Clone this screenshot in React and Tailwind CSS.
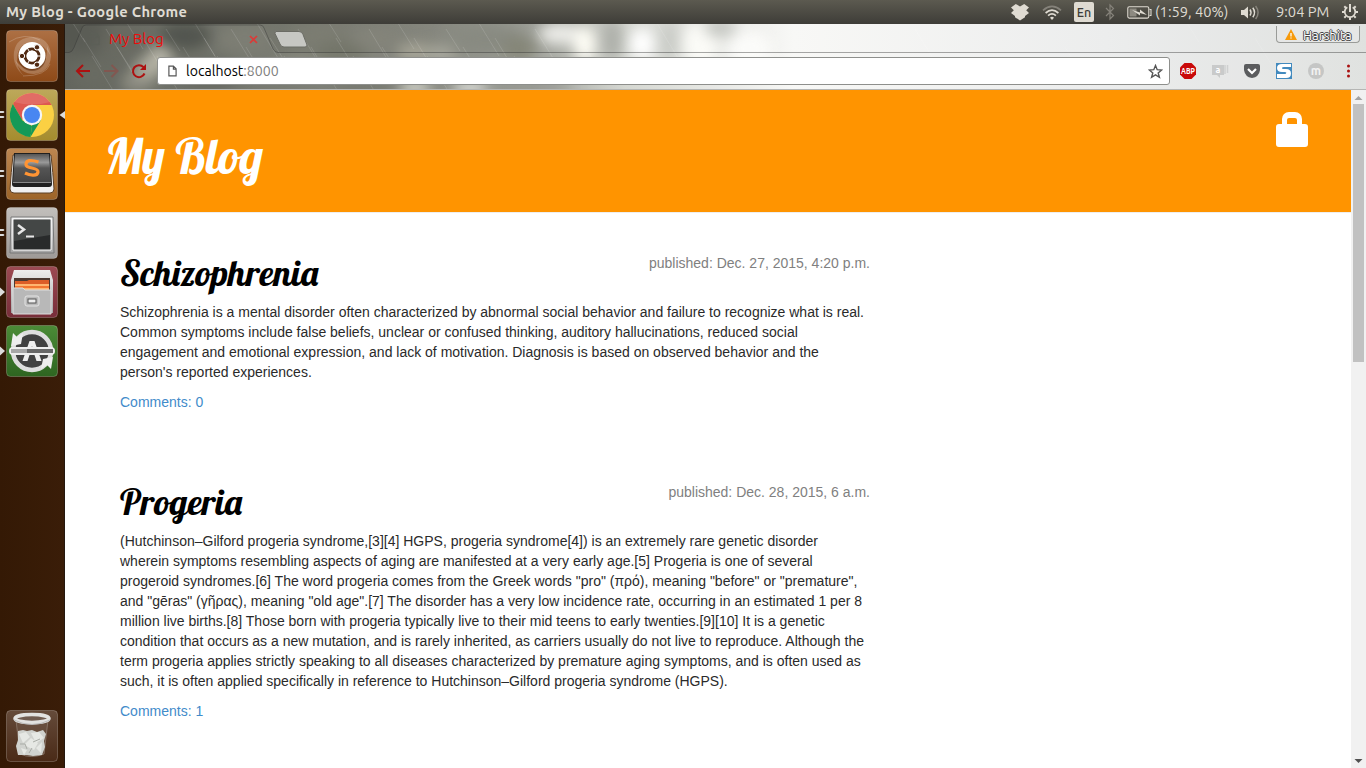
import React from "react";

const posts = [
  {
    title: "Schizophrenia",
    date: "Dec. 27, 2015, 4:20 p.m.",
    comments: 0,
    lines: [
      "Schizophrenia is a mental disorder often characterized by abnormal social behavior and failure to recognize what is real.",
      "Common symptoms include false beliefs, unclear or confused thinking, auditory hallucinations, reduced social",
      "engagement and emotional expression, and lack of motivation. Diagnosis is based on observed behavior and the",
      "person's reported experiences.",
    ],
  },
  {
    title: "Progeria",
    date: "Dec. 28, 2015, 6 a.m.",
    comments: 1,
    lines: [
      "(Hutchinson–Gilford progeria syndrome,[3][4] HGPS, progeria syndrome[4]) is an extremely rare genetic disorder",
      "wherein symptoms resembling aspects of aging are manifested at a very early age.[5] Progeria is one of several",
      "progeroid syndromes.[6] The word progeria comes from the Greek words \"pro\" (πρό), meaning \"before\" or \"premature\",",
      "and \"gēras\" (γῆρας), meaning \"old age\".[7] The disorder has a very low incidence rate, occurring in an estimated 1 per 8",
      "million live births.[8] Those born with progeria typically live to their mid teens to early twenties.[9][10] It is a genetic",
      "condition that occurs as a new mutation, and is rarely inherited, as carriers usually do not live to reproduce. Although the",
      "term progeria applies strictly speaking to all diseases characterized by premature aging symptoms, and is often used as",
      "such, it is often applied specifically in reference to Hutchinson–Gilford progeria syndrome (HGPS).",
    ],
  },
];

function TopBar() {
  return (
    <header className="flex h-6 shrink-0 items-center bg-linear-to-b from-[#5c5a50] to-[#3e3d38] pl-1.5 text-[#dfdbd2] font-['Ubuntu','Noto_Sans',sans-serif]">
      <div className="w-[1004px] whitespace-nowrap text-[14.67px] font-bold leading-6 tracking-[0.31px]">My Blog - Google Chrome</div>
      <svg className="h-5 w-5 shrink-0" viewBox="0 0 20 20" fill="#dfdbd2">
        <path d="M5.800 2 10 4.500 14.200 2 19 5.400 16.200 8.200 19 11 15 14V15.200L10 18.500 5 15.200V14L1 11 3.800 8.200 1 5.400Z" />
      </svg>
      <svg className="ml-3 h-5 w-5 shrink-0" viewBox="0 0 20 20" fill="none" strokeWidth="1.7">
        <path d="M1 8.300Q10 .5 19 8.300" stroke="#85827a" />
        <path d="M3.600 11Q10 5.400 16.400 11M6.100 13.600Q10 10.100 13.900 13.600" stroke="#dfdbd2" />
        <path d="M8 15.700Q10 14 12 15.700L10 18Z" fill="#dfdbd2" />
      </svg>
      <div className="ml-3 flex h-5 w-5 shrink-0 items-center justify-center rounded-[2px] bg-[#dfdbd2] pt-px text-[12.5px] font-medium text-[#3c3b37]">En</div>
      <svg className="ml-[11px] h-5 w-[10px] shrink-0" viewBox="0 0 10 20" fill="none" stroke="#85827a" strokeWidth="1.2">
        <path d="M1 6l7.500 7.500L5 17V3l3.500 3.500L1 14" />
      </svg>
      <svg className="ml-3 h-5 w-[25px] shrink-0" viewBox="0 0 25 20" fill="none" stroke="#dfdbd2" strokeWidth="1.1">
        <rect x=".8" y="4.700" width="21" height="11.400" rx="1.500" />
        <path d="M22.500 7.500H24v6h-1.500" />
        <path d="M2.500 6.500h7v8h-7z" fill="#8d8a81" stroke="none" />
        <path d="M5 8l8 2.600 0-3L20 13l-7-2v2.600Z" fill="#dfdbd2" stroke="none" />
      </svg>
      <div className="ml-[3px] w-[73px] shrink-0 whitespace-nowrap text-[14.67px] leading-6">(1:59, 40%)</div>
      <svg className="ml-3 h-5 w-[21px] shrink-0" viewBox="0 0 21 20" fill="none" stroke="#dfdbd2" strokeWidth="1.5">
        <path d="M1 8h3l4-3.500v12L4 13H1Z" fill="#dfdbd2" stroke="none" />
        <path d="M10 7.500q2 3 0 6M12.800 5.800q3.500 4.700 0 9.400" />
        <path d="M15.600 4q5 6.500 0 13" stroke="#85827a" />
      </svg>
      <div className="ml-[15px] w-[54px] shrink-0 whitespace-nowrap text-[14.67px] leading-6">9:04 PM</div>
      <svg className="ml-[11px] h-[18px] w-[18px] shrink-0" viewBox="0 0 18 18" fill="none" stroke="#dfdbd2">
        <path d="M6.300 4.300a5.300 5.300 0 1 0 5.400 0" strokeWidth="1.8" />
        <path d="M9 1v8" strokeWidth="2" />
        <path d="M1 9h2.500M15 9h2M9 14.500V17M3.300 3.300l1.600 1.600M14.700 3.300l-1.600 1.600M3.300 14.700l1.600-1.600M14.700 14.700l-1.600-1.600" strokeWidth="2" />
      </svg>
    </header>
  );
}

function Tile({ from, to, id, children }) {
  return (
    <svg className="block h-[52px] w-[52px] shrink-0" viewBox="0 0 52 52">
      <defs>
        <linearGradient id={id} x2="0" y2="1">
          <stop offset="0" stopColor={from} />
          <stop offset="1" stopColor={to} />
        </linearGradient>
        <linearGradient id={id + "m"} x2="0" y2="1">
          <stop offset="0" stopColor="#eee" />
          <stop offset="1" stopColor="#a5a5a5" />
        </linearGradient>
        <linearGradient id={id + "d"} x2="0" y2="1">
          <stop offset="0" stopColor="#555" />
          <stop offset=".3" stopColor="#999" />
          <stop offset=".5" stopColor="#555" />
          <stop offset="1" stopColor="#444" />
        </linearGradient>
      </defs>
      <rect x=".5" y=".5" width="51" height="51" rx="4" fill={`url(#${id})`} stroke="#fff" strokeOpacity=".22" />
      {children}
    </svg>
  );
}

function Row({ mark, active, children }) {
  return (
    <div className="flex h-[52px] items-center">
      <svg className="h-3 w-1.5 shrink-0" viewBox="0 0 6 12" fill="#dcdcdc">
        {mark === 2 && <path d="M0 2h3.500l1 1-1 1H0ZM0 7h3.500l1 1-1 1H0Z" />}
        {mark === 1 && <path d="M0 1.500 5 6 0 10.500Z" />}
      </svg>
      {children}
      {active && (
        <svg className="ml-px h-3 w-1.5 shrink-0" viewBox="0 0 6 12" fill="#dcdcdc">
          <path d="M6 2 0.500 6 6 10Z" />
        </svg>
      )}
    </div>
  );
}

function Launcher() {
  return (
    <aside className="flex w-[65px] shrink-0 flex-col gap-[7px] border-r border-[#25180f] bg-linear-to-r from-[#341905] to-[#3a1d08] pt-1.5 pb-1.5">
      <Row>
        <Tile id="dash" from="#ad7044" to="#8e4a18">
          <path d="M8 22Q10 7 28 7Q44 8 45 26Q38 14 26 12Q14 12 11 26Q10 38 18 46Q6 36 8 22" fill="#fff" fillOpacity=".2" />
          <path d="M45 26Q44 42 28 44Q14 44 9 30Q18 41 28 40Q42 36 41 16" fill="#fff" fillOpacity=".22" />
          <path d="M3 12Q18 2 34 10M17 46Q40 46 44 34" fill="none" stroke="#fff" strokeOpacity=".2" />
          <circle cx="26" cy="27" r="14" fill="#5a2c10" opacity=".5" />
          <circle cx="26" cy="25.500" r="13.500" fill="#fff" />
          <circle cx="26" cy="26" r="7" fill="none" stroke="#502912" strokeWidth="3" />
          <g stroke="#fff" strokeWidth="1" fill="#502912">
            <circle cx="16" cy="26" r="2.700" />
            <circle cx="31" cy="17.300" r="2.700" />
            <circle cx="31" cy="34.700" r="2.700" />
          </g>
          <path d="M26 26l9 0M26 26l-5-8.500M26 26l-5 8.500" stroke="#fff" strokeWidth="1" />
          <circle cx="26" cy="26" r="5.500" fill="#fff" />
        </Tile>
      </Row>
      <Row mark={2} active>
        <Tile id="chrome" from="#bda85a" to="#a58c2e">
          <circle cx="26" cy="26" r="22" fill="#fbd043" />
          <path d="M7 15A22 22 0 0 1 45 15L45.600 16H26L16 31Z" fill="#dd5850" />
          <path d="M6.900 15 16.500 31.500 26 37 24.500 48A22 22 0 0 1 6.900 15Z" fill="#159957" />
          <path d="M35 31 26 36 24.500 48Z" fill="#159957" />
          <path d="M8 13A22 22 0 0 1 44 13Q26 18 8 13Z" fill="#fff" opacity=".12" />
          <circle cx="26" cy="26" r="10.200" fill="#f5f5f5" />
          <circle cx="26" cy="26" r="8" fill="#4886f1" />
        </Tile>
      </Row>
      <Row mark={2}>
        <Tile id="sub" from="#bd8650" to="#9d6428">
          <path d="M7 7Q5 25 4 41q0 4 4 4h36q4 0 4-4Q47 25 45 7Z" fill="#f0f0f0" stroke="#5d4026" />
          <path d="M8 5h36l2 31q0 3-3 3H9q-3 0-3-3Z" fill="#202020" />
          <path d="M9 6h34l2 28H7Z" fill="url(#subd)" />
          <path d="M7 34.500h38" stroke="#888" />
          <path d="M32.500 14Q20 10 20 16.500c0 5 12.500 2 12 7.500-.500 5-9 3-13 1" fill="none" stroke="#ff9433" strokeWidth="3.200" />
        </Tile>
      </Row>
      <Row mark={2}>
        <Tile id="term" from="#c2bfbc" to="#9e9a97">
          <path d="M5 10h42l1 36H4Z" fill="url(#termm)" stroke="#777" />
          <path d="M7 12h38v31H7Z" fill="#292b2b" stroke="#fff" />
          <path d="M8 13h36v15L8 34Z" fill="#444746" />
          <path d="m12 18 6 4.500-6 4.500" fill="none" stroke="#e7e7e7" strokeWidth="2.500" />
          <path d="M20 29.500h8" stroke="#e7e7e7" strokeWidth="2" />
        </Tile>
      </Row>
      <Row mark={1}>
        <Tile id="files" from="#9c4a52" to="#782e39">
          <path d="M8 4h36l3 10v33H5V14Z" fill="url(#filesm)" />
          <path d="M8 12h36v16H8Z" fill="#4c3932" />
          <path d="M9 15h12l2-1h20v10H9Z" fill="#dc5d27" />
          <path d="M9 18h34v7H9Z" fill="#ffb570" />
          <path d="M9 20h34v2H9Z" fill="#f27631" />
          <path d="M7 22h10l2 2h26v24H7Z" fill="#b8b8b8" stroke="#ddd" />
          <rect x="19" y="30" width="14" height="10" rx="2" fill="#bbb" stroke="#e4e4e4" />
          <rect x="22" y="33" width="8" height="4" fill="#eee" stroke="#555" />
        </Tile>
      </Row>
      <Row mark={1}>
        <Tile id="upd" from="#4b8b37" to="#2e6621">
          <circle cx="26" cy="26" r="19" fill="#414141" stroke="#dedede" strokeWidth="4.500" />
          <path d="M23.500 16h5l7 20h-5l-2-6h-5l-2 6h-5ZM26 21l-2 6h4Z" fill="#eee" />
          <path d="m5 21 2-13 4 4 6-4-2 11ZM47 32 45 44l-4-4-6 4 2-10Z" fill="#eee" />
          <rect x="3" y="22" width="46" height="8" rx="4" fill="#eee" />
          <path d="M5 24h16v4H5Z" fill="#a7a7a7" />
          <path d="M21 24h26v4H21Z" fill="#676767" />
        </Tile>
      </Row>
      <div className="mt-auto">
        <Row>
          <Tile id="trash" from="#654b3a" to="#4a2a17">
            <path d="m10 10 4 34q11 5 24 0l4-34" fill="#806c60" fillOpacity=".3" stroke="#8d7b6f" strokeWidth=".8" />
            <path d="m12 21 5-1 4 1 5-1 5 2 6-2 3 4-2 7 1 6-3 8-9 1-6-1-9 0-2-9 2-6Z" fill="#d0d2ce" />
            <path d="m13 24 7-2 4 5-7 6ZM25 23l8-1 5 6-8 5ZM18 35l7-7 7 5-4 7ZM15 38l6 2-3 5ZM30 38l6-6-1 11Z" fill="#e6e8e4" />
            <path d="m14 34 5 0 2 5M27 32l7-3M23 43l3-5" stroke="#a9aca6" fill="none" />
            <ellipse cx="26" cy="8.500" rx="17" ry="4" fill="#705c50" stroke="#e2e2e0" strokeWidth="3.500" />
            <path d="M8 10q18 9 36 0" fill="none" stroke="#bbb" strokeWidth="1" />
          </Tile>
        </Row>
      </div>
    </aside>
  );
}

const blobs = [
  [15, 10, 30, 20, "#555750"], [60, 15, 25, 12, "#62635a"], [120, 12, 26, 14, "#4c4f48"], [95, 34, 13, 12, "#b5b3a5"],
  [82, 46, 13, 11, "#b0ae9f"], [72, 58, 16, 9, "#8f8e82"], [30, 50, 25, 12, "#63655c"], [145, 50, 30, 12, "#5a5c54"],
  [180, 15, 30, 14, "#78796f"], [240, 40, 30, 8, "#86877b"], [255, 12, 30, 10, "#7c7d72"], [275, 30, 26, 12, "#737569"],
  [310, 15, 24, 10, "#84847a"], [350, 28, 18, 8, "#a9a798"], [375, 30, 16, 8, "#a8a89c"], [350, 64, 16, 7, "#d8d9ce"],
  [300, 62, 34, 5, "#6c6d64"], [405, 64, 18, 7, "#e0e1dc"], [420, 15, 40, 14, "#888a81"], [455, 26, 18, 14, "#858678"],
  [495, 10, 22, 10, "#efefeb"], [480, 33, 16, 5, "#a4a59e"], [520, 20, 11, 18, "#fffef6"], [547, 16, 11, 22, "#aeb0aa"],
  [577, 20, 13, 16, "#ffffff"], [604, 18, 11, 22, "#caccc7"], [635, 20, 18, 22, "#fbfbf7"], [655, 4, 16, 9, "#c3c5c0"],
  [685, 25, 22, 18, "#fbfbf9"], [470, 63, 40, 5, "#8f9089"],
];

const streaks = [
  6, 18, 27, 41, 52, 60, 78, 92, 101, 118, 128, 139, 152, 166, 181, 190, 205, 219, 233, 246, 262, 271, 288, 304, 317,
  331, 349, 362, 381, 398, 412, 430, 449, 470, 520, 590, 672, 770, 850, 1000, 1120, 1190,
];

function ThemeArt() {
  return (
    <svg className="absolute inset-0 h-full w-full" viewBox="0 0 1301 66" preserveAspectRatio="none">
      <defs>
        <linearGradient id="sky">
          <stop offset="0" stopColor="#5d5f57" />
          <stop offset=".1" stopColor="#6c6e65" />
          <stop offset=".28" stopColor="#85867d" />
          <stop offset=".36" stopColor="#9c9e97" />
          <stop offset=".43" stopColor="#d4d6d0" />
          <stop offset=".56" stopColor="#f8f8f6" />
          <stop offset=".8" stopColor="#eceded" />
          <stop offset="1" stopColor="#dfe1df" />
        </linearGradient>
        <filter id="soft" x="-20%" y="-100%" width="140%" height="300%" colorInterpolationFilters="sRGB"><feGaussianBlur stdDeviation="7" /></filter>
      </defs>
      <rect width="1301" height="66" fill="url(#sky)" />
      <g filter="url(#soft)">
        {blobs.map(([x, y, rx, ry, c]) => <ellipse key={`${x}-${y}`} cx={x} cy={y} rx={rx} ry={ry} fill={c} />)}
      </g>
      <g stroke="#fff" strokeOpacity=".13">
        {streaks.map((x, i) => (
          <path key={x} d={`M${x} ${((i * 7) % 5) * 9 - 4}l${14 + (i % 4) * 4} ${22 + (i % 4) * 7}`} />
        ))}
      </g>
      <path d="M0 28.500h4q3 0 5-5L17 4q1-3 4-3h174q3 0 4 3l9 21q2 3.500 5 3.500h1088V66H0Z" fill="#fff" fillOpacity=".04" />
      <path d="M0 28.500h4q3 0 5-5L17 4q1-3 4-3h174q3 0 4 3l9 21q2 3.500 5 3.500h1088" fill="none" stroke="#333" strokeOpacity=".42" />
      <path d="M211 7.500h23q3 0 4 3l4 10.500q0 2-2 2h-21q-3 0-4-3l-5-10.500q0-2 1-2Z" fill="#c6c7c3" stroke="#6b6c65" />
      <path d="M0 65.500H1301" stroke="#b5b6b4" />
    </svg>
  );
}

function PageIcon({ color, className }) {
  return (
    <svg className={className} viewBox="0 0 10 13" fill="none" stroke={color} strokeWidth="1.300">
      <path d="M1 1h5l3 3v8H1ZM6 1v3.500h3" />
    </svg>
  );
}

function BrowserChrome() {
  return (
    <div className="relative h-[66px] shrink-0 overflow-hidden font-['Ubuntu','Noto_Sans',sans-serif]">
      <ThemeArt />
      <div className="relative flex h-[33px]">
        <div className="flex h-[30px] w-[200px] items-center pl-[25px]">
          <PageIcon color="#5c5f57" className="h-[14px] w-[10px]" />
          <span className="ml-[9px] w-[140px] whitespace-nowrap text-[15px] leading-5 text-[#f00a0a]">My Blog</span>
          <svg className="h-[9px] w-[9px] shrink-0" viewBox="0 0 9 9" stroke="#dc3a37" strokeWidth="1.700"><path d="M1 1l7 7M8 1 1 8" /></svg>
        </div>
        <div className="ml-auto mr-1.5 mt-0.5 flex h-[17px] w-[84px] items-center rounded-b-[4px] border border-t-0 border-[#999b98] bg-[#e6e7e6] pl-2">
          <svg className="h-[11px] w-3 shrink-0" viewBox="0 0 12 11"><path d="M6 0 12 11H0Z" fill="#f79a0b" /><path d="M6 4v3.500M6 8.500v1" stroke="#fff" strokeWidth="1.300" /></svg>
          <span className="ml-1.5 pt-px text-[13px] leading-4 text-white [text-shadow:1px_0_#444,-1px_0_#444,0_1px_#444,0_-1px_#444]">Harshita</span>
        </div>
      </div>
      <div className="relative flex h-7 items-center">
        <svg className="ml-[10px] h-4 w-[15px] shrink-0" viewBox="0 0 15 16" fill="none" stroke="#ad1111" strokeWidth="2"><path d="M15 8H2M8 2 2 8l6 6" /></svg>
        <svg className="ml-[14px] h-4 w-[15px] shrink-0" viewBox="0 0 15 16" fill="none" stroke="#8b4f49" strokeOpacity=".7" strokeWidth="2"><path d="M0 8H13M7.500 2l6 6-6 6" /></svg>
        <svg className="ml-3 h-4 w-4 shrink-0" viewBox="0 0 16 16" fill="none" stroke="#ad1111" strokeWidth="2"><path d="M13.500 10.500A6 6 0 1 1 12.500 4.200" /><path d="M15 1v6H9Z" fill="#ad1111" stroke="none" /></svg>
        <div className="ml-[10px] flex h-[28px] w-[1013px] shrink-0 items-center rounded-[3px] border border-[#8e8f8c] bg-white pl-[10px] pr-[6px] text-[14.1px]">
          <PageIcon color="#555" className="h-3 w-[9px]" />
          <span className="ml-[9px] whitespace-nowrap leading-5 text-black">localhost<span className="text-[#808080]">:8000</span></span>
          <svg className="ml-auto h-[15px] w-[15px]" viewBox="0 0 15 15" fill="none" stroke="#555" strokeWidth="1.400"><path d="m7.500 1.500 1.700 4.200 4.500.300-3.500 2.900 1.200 4.400-3.900-2.500-3.900 2.500 1.200-4.400L1.300 6l4.500-.300Z" /></svg>
        </div>
        <div className="ml-[9px] flex items-center gap-4">
          <svg className="h-[18px] w-[18px]" viewBox="0 0 18 18"><path d="M5.500 1h7L17 5.500v7L12.500 17h-7L1 12.500v-7Z" fill="#c90909" /><text x="9" y="12" textAnchor="middle" fontSize="8.500" fontWeight="700" fill="#fff" textLength="14" lengthAdjust="spacingAndGlyphs">ABP</text></svg>
          <svg className="-ml-0.5 h-4 w-[18px]" viewBox="0 0 18 16"><path d="M1 2h12v10H9v3l-3-3H1Z" fill="#c9caca" /><path d="M14 2v9M16.500 2v8" stroke="#cfd0d0" strokeWidth="1.500" /><text x="7" y="10" textAnchor="middle" fontSize="9" fontWeight="700" fill="#fff">a</text></svg>
          <svg className="-ml-px h-4 w-4" viewBox="0 0 16 16"><path d="M0 3q0-2 2-2h12q2 0 2 2v4q-1 7-8 8-7-1-8-8Z" fill="#5b5c5e" /><path d="m4 6 4 4 4-4" fill="none" stroke="#fff" strokeWidth="2.200" /></svg>
          <svg className="h-4 w-4" viewBox="0 0 16 16"><path d="M0 0h16v16H0Z" fill="#428abe" /><path d="M15 1H6Q1 1 1 5t5 4h3q2 0 1 1.500-.500.500-1.500.500H1v4h9q5 0 5-4.500T10 6H7Q6 6 6 5q0-1 2-1h7Z" fill="#fff" /></svg>
          <svg className="h-4 w-4" viewBox="0 0 16 16"><circle cx="8" cy="8" r="8" fill="#c5c6c5" /><text x="8" y="11.500" textAnchor="middle" fontSize="12" fontWeight="700" fill="#f2f2f2">m</text></svg>
          <svg className="ml-[6px] h-4 w-1" viewBox="0 0 4 16" fill="#a91111"><circle cx="2.500" cy="3" r="1.500" /><circle cx="2.500" cy="8" r="1.500" /><circle cx="2.500" cy="13" r="1.500" /></svg>
        </div>
      </div>
    </div>
  );
}

function Post({ title, date, comments, lines }) {
  return (
    <article className="mb-[60px] w-[750px]">
      <div className="flex h-[59px] items-start justify-between">
        <h2 className="whitespace-nowrap pt-2 font-['Lobster','Liberation_Serif',serif] text-[36px] font-normal leading-[44px] text-black">{title}</h2>
        <time className="pt-2.5 leading-5 text-[#808080]">published: {date}</time>
      </div>
      <p className="whitespace-nowrap leading-5 text-[#2a2a2a]">
        {lines.map((line) => <span key={line} className="block h-5">{line}</span>)}
      </p>
      <a className="mt-2.5 block leading-5 text-[#428bca]">Comments: {comments}</a>
    </article>
  );
}

function BlogPage() {
  return (
    <div className="flex min-h-0 flex-1">
      <main className="flex-1 overflow-hidden bg-white font-['Liberation_Sans',Arial,sans-serif] text-[14px]">
        <div className="flex h-[123px] items-start justify-between border-b border-[#eee] bg-[#ff9400] pl-[40px] pr-[43px]">
          <h1 className="whitespace-nowrap pt-[37px] font-['Lobster','Liberation_Serif',serif] text-[48px] font-normal leading-[58px] text-white">My Blog</h1>
          <svg className="mt-[22px] h-[35px] w-8" viewBox="0 0 32 35" fill="#fff" fillRule="evenodd">
            <path d="M6 12V7q0-3 2-5t5-2h6q3 0 5 2t2 5v5h3q3 0 3 3v17q0 3-3 3H3q-3 0-3-3V15q0-3 3-3ZM11 12h10V8q0-2-2-2h-6q-2 0-2 2Z" />
          </svg>
        </div>
        <div className="pl-[55px] pt-[30px]">
          {posts.map((p) => <Post key={p.title} {...p} />)}
        </div>
      </main>
      <div className="flex w-[15px] shrink-0 flex-col items-center bg-[#f1f1f1]">
        <svg className="h-[14px] w-[15px] shrink-0" viewBox="0 0 15 14" fill="#a3a3a3"><path d="m7.500 6 4 4h-8Z" /></svg>
        <div className="h-[258px] w-[11px] bg-[#c1c1c1]" />
        <svg className="mt-auto h-[15px] w-[15px] shrink-0" viewBox="0 0 15 15" fill="#505050"><path d="m7.500 10 4-4h-8Z" /></svg>
      </div>
    </div>
  );
}

export default function App() {
  return (
    <div className="flex h-[768px] w-[1366px] flex-col overflow-hidden">
      <TopBar />
      <div className="flex min-h-0 flex-1">
        <Launcher />
        <div className="flex min-w-0 flex-1 flex-col">
          <BrowserChrome />
          <BlogPage />
        </div>
      </div>
    </div>
  );
}
